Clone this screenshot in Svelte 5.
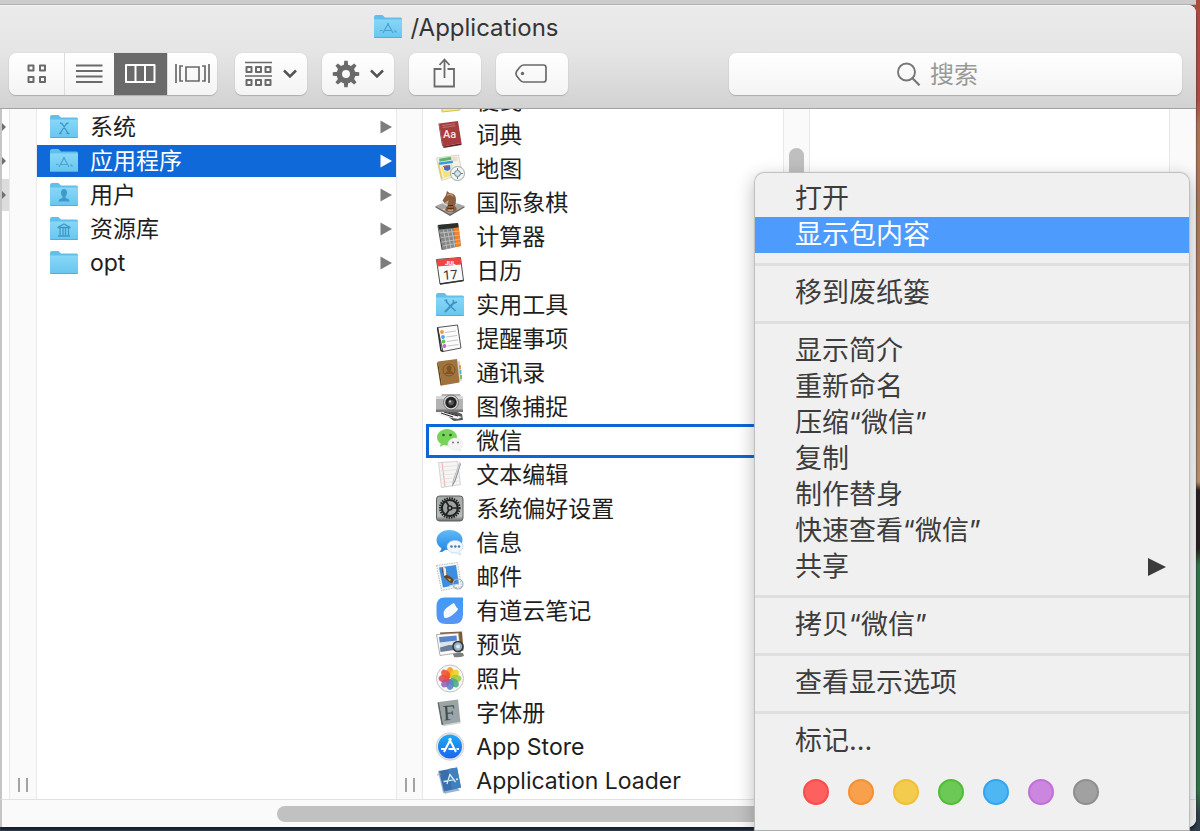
<script>
  const places = [
    { name: '系统', glyph: 'x' },
    { name: '应用程序', glyph: 'apps', selected: true },
    { name: '用户', glyph: 'user' },
    { name: '资源库', glyph: 'library' },
    { name: 'opt', glyph: '' },
  ];
  const apps = [
    { name: '便笺', icon: 'stickies' },
    { name: '词典', icon: 'dictionary' },
    { name: '地图', icon: 'maps' },
    { name: '国际象棋', icon: 'chess' },
    { name: '计算器', icon: 'calculator' },
    { name: '日历', icon: 'calendar' },
    { name: '实用工具', icon: 'utilities' },
    { name: '提醒事项', icon: 'reminders' },
    { name: '通讯录', icon: 'contacts' },
    { name: '图像捕捉', icon: 'capture' },
    { name: '微信', icon: 'wechat', target: true },
    { name: '文本编辑', icon: 'textedit' },
    { name: '系统偏好设置', icon: 'preferences' },
    { name: '信息', icon: 'messages' },
    { name: '邮件', icon: 'mail' },
    { name: '有道云笔记', icon: 'note' },
    { name: '预览', icon: 'preview' },
    { name: '照片', icon: 'photos' },
    { name: '字体册', icon: 'fontbook' },
    { name: 'App Store', icon: 'appstore' },
    { name: 'Application Loader', icon: 'loader' },
  ];
  const groups = [
    ['打开', '显示包内容'],
    ['移到废纸篓'],
    ['显示简介', '重新命名', '压缩“微信”', '复制', '制作替身', '快速查看“微信”', '共享'],
    ['拷贝“微信”'],
    ['查看显示选项'],
    ['标记...'],
  ];
  const tags = [
    ['红色', '#fc605f', '#fb4b49'],
    ['橙色', '#f8a04c', '#f6902f'],
    ['黄色', '#f3cb4f', '#f0c030'],
    ['绿色', '#6cc956', '#50bd36'],
    ['蓝色', '#4fb6f4', '#2fa6ef'],
    ['紫色', '#cb87df', '#c06fd8'],
    ['灰色', '#a1a1a1', '#8e8e8e'],
  ];
  const petals = ['#f9961b', '#f3cf17', '#9cc93a', '#45ac83', '#5285cb', '#8d66b5', '#dc4560', '#f0512b'];
  const teeth = [0, 45, 90, 135, 180, 225, 270, 315];
</script>

{#snippet folder(glyph)}
  <svg class="icon" viewBox="0 0 30 30" aria-hidden="true">
    <path d="M1 5q0-2 2-2h6.500l2.500 2.500h15.500q1.500 0 1.500 1.500v17.500q0 1.500-1.500 1.500h-25q-1.500 0-1.500-1.500z" fill="#62bfe9" />
    <path d="M1 7.500h28v17q0 1.500-1.500 1.500h-25q-1.500 0-1.500-1.500z" fill="url(#folder-face)" />
    <path d="M1.500 25.500h27" stroke="#4fafd9" />
    {#if glyph === 'x'}
      <path d="M11 11q2 0 3 2l5 8.500M19.500 11q-2 0-3 2l-5.500 8.500M10 21.500h2.500M17.500 21.500h3" fill="none" stroke="#3f97c4" stroke-width="1.300" />
    {:else if glyph === 'apps'}
      <path d="M15.500 11l-5.500 10M14.500 11l5.500 10M7 18.500h2.500M12 18.500h6.500M21.500 18.500l2 2" fill="none" stroke="#4ca3d0" stroke-width="1.200" />
    {:else if glyph === 'user'}
      <path d="M12 13q0-4 3-4t3 4q0 2.500-1.500 3.500v1.500q4 .800 4 3.500h-11q0-2.700 4-3.500v-1.500q-1.500-1-1.500-3.500z" fill="#4099c8" />
    {:else if glyph === 'library'}
      <path d="M8.500 13.500l6.500-3.500 6.500 3.500zM9 22h12M11 14v7M14 14v7M16.500 14v7M19.500 14v7" fill="none" stroke="#3f97c4" stroke-width="1.300" />
    {:else if glyph === 'tools'}
      <path d="M11 11.500l9.500 9.500" stroke="#3f93c4" stroke-width="1.500" />
      <path d="M19 12.500l-8.500 9" stroke="#3f93c4" stroke-width="2" stroke-linecap="round" />
      <path d="M18 10l1 3 3-1M9.500 10.500l2-.500 .5 2" fill="none" stroke="#3f93c4" stroke-width="1.400" />
    {/if}
  </svg>
{/snippet}

{#snippet appIcon(kind)}
  {#if kind === 'utilities'}
    {@render folder('tools')}
  {:else}
    <svg class="icon" viewBox="0 0 30 30" aria-hidden="true">
      {#if kind === 'stickies'}
        <path d="M6 3h19v21l-18 2z" fill="#f5ec82" stroke="#cfc34a" />
      {:else if kind === 'dictionary'}
        <path d="M4 3.500l19-2.500 3.500 22-18.500 3.500z" fill="#a63c3e" />
        <path d="M8 26.500l18.500-3.500v2l-18 3z" fill="#5f2527" />
        <path d="M4 3.500l4 23-1-1-3.500-21.500z" fill="#7d2a2d" />
        <path d="M7 5.500l13-1.700M7.500 7.500l13-1.700" stroke="#c87c7c" stroke-width=".8" />
        <text x="8" y="18" font-family="Roboto" font-size="11" font-weight="500" fill="#f6e6e6">Aa</text>
      {:else if kind === 'maps'}
        <path d="M1.500 4l22-3 4 19-21 6.500z" fill="#f5f3e8" stroke="#c9c7bd" stroke-width=".7" />
        <path d="M4 4.800l12-2 .5 3-12 2z" fill="#5bb667" />
        <path d="M17 3l5-.5 1 4-5 1z" fill="#f3d9d3" />
        <path d="M3.500 8.500l14-2 .7 2.500-14 2z" fill="#3c9be0" />
        <path d="M6 12l11-2 2 11-10 3z" fill="#f4e27a" />
        <path d="M8 11.500l7.500-1 .5 5q-3 3-7 1z" fill="#3f71c3" stroke="#fff" stroke-width=".8" />
        <path d="M8 12.500l7-1" stroke="#d95a55" />
        <path d="M3.500 10l3.500 15" stroke="#efc94a" stroke-width="1.500" />
        <circle cx="22.500" cy="19.500" r="7" fill="#f4f6f6" stroke="#9fa6a8" />
        <circle cx="22.500" cy="19.500" r="3" fill="#d5e2e4" stroke="#64888e" />
        <path d="M22.500 14v2M22.500 23v2M17 19.500h2M26 19.500h2" stroke="#777" />
      {:else if kind === 'chess'}
        <path d="M.5 18l14-5.500 15 5.500-14.500 8.500z" fill="#a7a6a4" />
        <path d="M8 15.500l7 3 8-3M7.500 22l15-7M22 22l-14.500-7" stroke="#d9d8d5" fill="none" />
        <path d="M.5 18l14.500 8 14.500-8v1.500l-14.500 8.500-14.500-8.500z" fill="#6e6a67" />
        <path d="M10.500 23q-1-3 2-5l1-5.500-4 2.500-2-2.500 3.500-5.500 1-4 2.500 2q6.500 0 6.500 7 0 4-1.500 6 3 2 2 5-5 2.500-11 0z" fill="#8d5e3e" />
        <path d="M12 20q4 1.500 7 0M13 17.500h5" stroke="#4d2d19" fill="none" />
        <path d="M12 7.500q4-3 6 1M13 22q3 1 5 0" stroke="#c69a72" fill="none" stroke-width="1.500" />
      {:else if kind === 'calculator'}
        <path d="M3 3l20-2 3 23-18 4z" fill="#858687" />
        <path d="M3 3l20-2 .8 4.500-20 2z" fill="#29302d" />
        <path d="M19 6l4.800-.500 2.200 18.500-5 1z" fill="#f58120" />
        <path d="M3 3l5 25-1.500-.500-4-23.500z" fill="#4a4b4c" />
        <path d="M5 11l20-2M6 15.500l19-2.500M7 20l19-3M8 24l18-3.500M8.500 8l3.500 19M12.500 7.500l3.500 19M16.500 7l3.500 18.500" stroke="#c4c6c6" stroke-width=".8" />
      {:else if kind === 'calendar'}
        <path d="M1.500 3.500l24-2 3 23-23.500 3.500z" fill="#fafafa" stroke="#4d4d4d" stroke-width="1" />
        <path d="M1.500 3.500l24-2 .8 7-24 2z" fill="#ef4444" />
        <path d="M5 28l23.500-3.500" stroke="#333" stroke-width="1.500" />
        <text x="10" y="8.500" font-family="Roboto" font-size="6" font-weight="700" fill="#fff">JUL</text>
        <text x="8" y="23.500" font-family="Roboto" font-size="13" fill="#333" transform="rotate(-5 15 19)">17</text>
      {:else if kind === 'reminders'}
        <path d="M2.500 3.500l20-2.500 3.500 23-18 3.500z" fill="#fbfbfb" stroke="#555" stroke-width="1" />
        <path d="M2.500 3.500l3.500 23 2 1" fill="none" stroke="#2e2e2e" stroke-width="1.500" />
        <circle cx="7" cy="8" r="1.900" fill="#ee963d" /><circle cx="8" cy="13" r="1.900" fill="#4aa3e4" />
        <circle cx="8.500" cy="17.500" r="1.900" fill="#67c15a" /><circle cx="9.500" cy="22" r="1.900" fill="#b86bd4" />
        <path d="M10 8.500l11-1.500M11 13l11-1.500M12 17.500l11-1.500M12.500 22l11-1.500" stroke="#c6c6c6" />
      {:else if kind === 'contacts'}
        <path d="M22 3l3 .500 2 19-3 1z" fill="#cfd7d9" />
        <path d="M24 7l2 .500v4l-2-.500z" fill="#e39a43" /><path d="M24.500 12h2v4h-2z" fill="#56b6d8" /><path d="M25 17h2v4h-2z" fill="#7bbf54" />
        <path d="M3 3.500l19-2.500 2.500 23.500-17.500 3z" fill="#a0733c" />
        <path d="M3 3.500l4 24h-1.500l-3.500-22z" fill="#654218" />
        <circle cx="14" cy="12" r="6" fill="none" stroke="#7d5524" />
        <path d="M10 16q1-3 3-3-1.500-1-1.500-3t2.500-2.500 2.500 2.500-1 3q2.500.500 3.500 3" fill="#7f5523" />
      {:else if kind === 'capture'}
        <path d="M2 17l8-2 17 7 1 6-9 1z" fill="#565656" /><path d="M1 19l5 5 17 3 4-2-16-5z" fill="#f1f1f1" /><path d="M6 21l12 4M9 20l14 4" stroke="#222" />
        <path d="M1 4h5l1-2h18l1 2h2v16h-27z" fill="#b3b3b3" /><path d="M1 4h27v3h-27z" fill="#d8d8d8" /><path d="M1 17.500h27v2.500h-27z" fill="#777" />
        <circle cx="16" cy="10.500" r="7.500" fill="#d3d3d3" stroke="#777" /><circle cx="16" cy="10.500" r="5.700" fill="#232323" /><circle cx="16" cy="10.500" r="2.800" fill="#57595c" /><circle cx="15" cy="9.500" r="1" fill="#dcdcdc" />
      {:else if kind === 'wechat'}
        <path d="M12 3c-5.500 0-10 3.700-10 8.300 0 2.800 1.500 4.900 3.800 6.400l-1 3.300 3.700-2.100q1.700.500 3.500.500c5.500 0 10-3.500 10-8.100s-4.500-8.300-10-8.300z" fill="#76d45a" />
        <circle cx="8.500" cy="9" r="1.300" fill="#2d5e22" /><circle cx="15.500" cy="9" r="1.300" fill="#2d5e22" />
        <path d="M20.500 12c-4.200 0-7.500 2.700-7.500 6s3.300 6 7.500 6q1.500 0 2.700-.300l2.800 1.500-.700-2.400c1.700-1.200 2.700-2.800 2.700-4.800 0-3.300-3.300-6-7.500-6z" fill="#f3f4f3" stroke="#dfe2df" stroke-width=".5" />
        <circle cx="18" cy="16.500" r="1" fill="#777" /><circle cx="23" cy="16.500" r="1" fill="#777" />
      {:else if kind === 'textedit'}
        <path d="M3.500 2.500l19-1 3 23-19 3z" fill="#f6f5f4" stroke="#c4c2c0" stroke-width=".7" />
        <path d="M7 2.500l3 24" stroke="#efaaaa" /><path d="M5 7l18-1.500M5.500 11l18-1.500M6 15l18-1.500M6.500 19l18-1.500M7 23l18-2" stroke="#dcdcdc" stroke-width=".7" />
        <path d="M24.500 2l1.500 2-5.500 17-3.500 6 1-6.500z" fill="#87898c" /><path d="M24.500 2l1 1-6 18-2 3 1-4z" fill="#d4d6d8" />
      {:else if kind === 'preferences'}
        <rect x="1.500" y="2" width="26.500" height="25" rx="3" fill="url(#metal)" stroke="#5d6160" />
        <circle cx="14.800" cy="14" r="9.800" fill="none" stroke="#222" stroke-width="2" stroke-dasharray="1.500 1" />
        <circle cx="14.800" cy="14" r="8" fill="#9da1a0" stroke="#202222" stroke-width="2.200" />
        <circle cx="14.800" cy="14" r="2" fill="none" stroke="#222" stroke-width="1.500" />
        <path d="M16.800 14h6M13.800 12l-3-5M13.800 16l-3 5" stroke="#222" stroke-width="1.700" />
      {:else if kind === 'messages'}
        <path d="M14 2c-7 0-12.500 4.500-12.500 10 0 3.500 2 6.500 5 8.200q-.500 2.500-2.500 4 4 0 6.500-2.500c9 2 17-3 17-9.700s-6.500-10-13.500-10z" fill="url(#bubble)" />
        <path d="M20 12.500c-4.500 0-8 2.700-8 6.200s3.500 6.300 8 6.300l1.500-.200q2 1.700 4.500 1.700-1.500-1-1.700-3c2.200-1 3.700-2.700 3.700-4.800 0-3.500-3.500-6.200-8-6.200z" fill="#f2f7fb" stroke="#a9cbe4" stroke-width=".6" />
        <circle cx="16.500" cy="18.500" r="1.300" fill="#3f7fb6" /><circle cx="20.300" cy="18.500" r="1.300" fill="#3f7fb6" /><circle cx="24" cy="18.500" r="1.300" fill="#3f7fb6" />
      {:else if kind === 'mail'}
        <path d="M1.500 3.500l21-3 4 24-20 4z" fill="#f5f5f3" stroke="#a9a9a7" stroke-width=".8" stroke-dasharray="1.500 1" />
        <path d="M4 5.500l17-2.500 3 19.500-16 3z" fill="#3d8ede" />
        <path d="M8 5q3-.500 3 3l1 5 4 2 5 5-3 0 1 2-5-2-5-5-2-6z" fill="#63452a" /><path d="M8 5q3-.500 3 3l.500 5-2.500 1z" fill="#f0ece2" /><path d="M12 16l4 1.500-1 2z" fill="#e5a936" />
        <circle cx="23" cy="22" r="5" fill="none" stroke="#a5b3bf" stroke-width="1.200" /><path d="M14 24l10-2" stroke="#cfe2f2" />
      {:else if kind === 'note'}
        <path d="M9.500 1.500h18.500v17q0 9.500-9.500 9.500h-7.500q-9.500 0-9.500-9.500v-8q0-9 8-9z" fill="url(#note-blue)" />
        <path d="M9 21.500q-1.500-7 3-10l6.500-4.500q1 0 2 2.500t2.500 3q.500 1.500-5 6t-9 3z" fill="#f6faff" />
      {:else if kind === 'preview'}
        <path d="M5 2.500l22-1 1.500 19-20 2z" fill="#7e5b36" /><path d="M1.500 4.500l22-1.500 2 19.500-20.500 3z" fill="#fbfbfb" stroke="#8e8e8e" stroke-width=".7" />
        <path d="M4 7l17.500-1.500.5 5.500-17.200 2z" fill="#5884c8" /><path d="M4.800 12.500l17.200-2 .7 8-17 2.500z" fill="#dbe4ec" /><path d="M5 17.500l9-2.500 8 .5.500 4-17 2.500z" fill="#6b7d98" />
        <circle cx="23" cy="16.500" r="5" fill="#98b3c8" stroke="#3a3a3a" stroke-width="1.700" /><circle cx="23" cy="16.500" r="2" fill="#dbe7ef" /><path d="M18 24q5-2 10-1l1 3q-5 2-10 1z" fill="#7c7d7f" />
      {:else if kind === 'photos'}
        <circle cx="15" cy="14.500" r="13.500" fill="#f7f7f7" stroke="#c2c2c2" />
        {#each petals as colour, i}
          <ellipse cx="15" cy="8.500" rx="3.800" ry="5.400" fill={colour} fill-opacity=".88" transform="rotate({i * 45} 15 14.500)" />
        {/each}
      {:else if kind === 'fontbook'}
        <path d="M4 4l19-2.500 2.500 23-17 3z" fill="#9ba5a5" /><path d="M4 4l4.500 23.500-2-.700-4-22z" fill="#5d6768" /><path d="M8.500 27.500l17-3" stroke="#d1d5d5" stroke-width="1.500" />
        <text x="8" y="22" font-family="Liberation Serif" font-size="22" fill="#414c4e" transform="rotate(-4 15 15)">F</text>
      {:else if kind === 'appstore'}
        <circle cx="15" cy="14.500" r="13.800" fill="#e6e7e9" stroke="#bbbdc0" stroke-width=".6" /><circle cx="15" cy="14.500" r="12" fill="url(#store)" />
        <path d="M16 6.500l-7 13.500M14 6.500l7 13.500M6 17h5M13.500 17h5M21.500 17h2.500" fill="none" stroke="#fff" stroke-width="2" />
      {:else if kind === 'loader'}
        <path d="M3 5.500l2-1 20 20-15 3-2-1z" fill="#94b4cf" /><path d="M4 5l18-3.500 4 20-17 4z" fill="#386fae" /><path d="M13 3l9-1.500 4 20-9 2z" fill="#437fbd" />
        <path d="M15 8l-3 10M14.500 8l6 8M8.500 15.500l4-.500M14 14.700l5-1M21 13.500l2-.5" fill="none" stroke="#d7eaf8" stroke-width="1.300" /><path d="M2 9l4-1M8.500 24.500l2 3" stroke="#9aa6b0" />
      {/if}
    </svg>
  {/if}
{/snippet}

{#snippet chevron()}
  <svg width="16" height="12" viewBox="0 0 16 12" aria-hidden="true"><path d="M2 2.500l6 6 6-6" fill="none" stroke="#535353" stroke-width="2.500" /></svg>
{/snippet}

<svg class="defs" aria-hidden="true">
  <defs>
    <linearGradient id="folder-face" x2="0" y2="1"><stop stop-color="#88d7f8" /><stop offset="1" stop-color="#67c6ef" /></linearGradient>
    <linearGradient id="metal" x2="0" y2="1"><stop stop-color="#a4aaa8" /><stop offset=".8" stop-color="#b9bdbc" /><stop offset="1" stop-color="#676b6a" /></linearGradient>
    <linearGradient id="bubble" x2="0" y2="1"><stop stop-color="#62baf8" /><stop offset="1" stop-color="#1e86e4" /></linearGradient>
    <linearGradient id="note-blue" x2="0" y2="1"><stop stop-color="#409bf5" /><stop offset="1" stop-color="#5a95f5" /></linearGradient>
    <linearGradient id="store" x2="0" y2="1"><stop stop-color="#1fa9f6" /><stop offset="1" stop-color="#1b66ea" /></linearGradient>
  </defs>
</svg>

<div class="desktop">
  <div class="behind"></div>
  <main class="window">
    <header>
      <h1>{@render folder('apps')}<span>/Applications</span></h1>
      <div class="toolbar">
        <div class="views">
          <button aria-label="图标显示">
            <svg width="20" height="20" viewBox="0 0 20 20"><path d="M1.500 1.500h5v5h-5zM13 1.500h5v5h-5zM1.500 13h5v5h-5zM13 13h5v5h-5z" fill="none" stroke="#6a6a6a" stroke-width="2" stroke-linejoin="round" /></svg>
          </button>
          <button aria-label="列表显示">
            <svg width="28" height="20" viewBox="0 0 28 20"><path d="M0 1.500h26.500M0 7h26.500M0 12.500h26.500M0 18h26.500" stroke="#6a6a6a" stroke-width="1.800" /></svg>
          </button>
          <button aria-label="分栏显示" class="active">
            <svg width="32" height="20" viewBox="0 0 32 20"><path d="M1 1h28.500v17h-28.500zM10.500 1v17M20 1v17" fill="none" stroke="#fff" stroke-width="2" stroke-linejoin="round" /></svg>
          </button>
          <button aria-label="封面流显示">
            <svg width="36" height="20" viewBox="0 0 36 20"><path d="M11 3h13v14h-13zM1 0v19M34 0v19M8 2h-3v15h3M27 2h3v15h-3" fill="none" stroke="#6a6a6a" stroke-width="1.700" /></svg>
          </button>
        </div>
        <button class="tool" aria-label="排列">
          <svg width="28" height="26" viewBox="0 0 28 26"><path d="M0 1.500h27M0 15h27" stroke="#6a6a6a" stroke-width="1.700" /><path d="M1.500 6h5v5h-5zM11 6h5v5h-5zM20.500 6h5v5h-5zM1.500 19h5v5h-5zM11 19h5v5h-5zM20.500 19h5v5h-5z" fill="none" stroke="#6a6a6a" stroke-width="2" stroke-linejoin="round" /></svg>
          {@render chevron()}
        </button>
        <button class="tool" aria-label="操作">
          <svg width="28" height="28" viewBox="0 0 28 28">
            {#each teeth as angle}
              <path d="M11.700 6l.600-5.200h3.400l.600 5.200z" fill="#6a6a6a" transform="rotate({angle} 14 14)" />
            {/each}
            <circle cx="14" cy="14" r="6.700" fill="none" stroke="#6a6a6a" stroke-width="5.500" />
          </svg>
          {@render chevron()}
        </button>
        <button class="tool" aria-label="共享">
          <svg width="24" height="32" viewBox="0 0 24 32"><path d="M8.500 11h-7v17.500h19.500v-17.500h-6.500M11.500 20v-18M6.500 7l5-5.500 5 5.500" fill="none" stroke="#6a6a6a" stroke-width="1.800" /></svg>
        </button>
        <button class="tool" aria-label="标记">
          <svg width="34" height="22" viewBox="0 0 34 22"><path d="M8.500 2h20q2.500 0 2.500 2.500v12q0 2.500-2.500 2.500h-20q-2 0-4-2.500l-2.700-3.500q-1.600-2.500 0-5l2.700-3.500q2-2.500 4-2.500z" fill="none" stroke="#6a6a6a" stroke-width="1.700" /><circle cx="7.500" cy="10.500" r="1.700" fill="#6a6a6a" /></svg>
        </button>
        <label class="search">
          <svg width="24" height="24" viewBox="0 0 24 24" aria-hidden="true"><circle cx="9.500" cy="10" r="8.500" fill="none" stroke="#777" stroke-width="1.900" /><path d="M15.500 16.300l7 7" stroke="#777" stroke-width="2.200" /></svg>
          <input type="search" placeholder="搜索" aria-label="搜索" />
        </label>
      </div>
    </header>

    <div class="columns">
      <ul class="list parent">
        <li></li>
        <li></li>
        <li class="trail"></li>
      </ul>
      <div class="gutter"><i class="grip"></i></div>
      <ul class="list places">
        {#each places as place}
          <li>
            <button class="row" class:selected={place.selected}>
              {@render folder(place.glyph)}
              <span>{place.name}</span>
              <svg class="arrow" width="12" height="14" viewBox="0 0 12 14" aria-hidden="true"><path d="M.500.500l11.500 6.500-11.500 6.500z" fill="currentColor" /></svg>
            </button>
          </li>
        {/each}
      </ul>
      <div class="gutter"><i class="grip"></i></div>
      <ul class="list apps">
        {#each apps as app}
          <li>
            <button class="row" class:target={app.target}>
              {@render appIcon(app.icon)}
              <span>{app.name}</span>
            </button>
          </li>
        {/each}
      </ul>
      <div class="gutter"><i class="thumb"></i></div>
      <div></div>
      <div class="gutter"></div>
    </div>
    <div class="track"><i></i></div>
  </main>

  <div class="menu" role="menu">
    {#each groups as group, g}
      {#if g > 0}<hr />{/if}
      {#each group as item}
        <button role="menuitem" class:highlight={item === '显示包内容'}>
          {item}
          {#if item === '共享'}
            <svg width="18" height="18" viewBox="0 0 18 18" aria-hidden="true"><path d="M0 0l18 9-18 9z" fill="#3b3b3b" /></svg>
          {/if}
        </button>
      {/each}
    {/each}
    <div class="tags">
      {#each tags as [name, fill, edge]}
        <button aria-label={name} style="background:{fill};border-color:{edge}"></button>
      {/each}
    </div>
  </div>
</div>

<style>
  :global(body) {
    margin: 0;
  }
  * {
    box-sizing: border-box;
  }
  button {
    font: inherit;
    color: inherit;
    border: 0;
    padding: 0;
    background: none;
  }
  ul {
    list-style: none;
    margin: 0;
    padding: 0;
  }
  .defs {
    position: absolute;
    width: 0;
    height: 0;
  }
  .desktop {
    position: relative;
    display: flex;
    flex-direction: column;
    height: 100vh;
    padding: 0 4px 4px 0;
    overflow: hidden;
    font-family: Inter, 'Noto Sans CJK SC', sans-serif;
    background: linear-gradient(#a84c40 0 12%, #a97354 15%, #c0926f 58%, #2b2022 59% 66%, #35764a 68% 95%, #33404e 98%);
  }
  .behind {
    flex: none;
    height: 5px;
    background: #cdcccd;
    border-bottom: 1px solid #b1afb1;
  }
  .window {
    flex: 1;
    min-height: 0;
    display: flex;
    flex-direction: column;
    overflow: hidden;
    border-radius: 0 8px 8px 0;
    background: #fff;
    box-shadow: 0 3px 2px #17222d;
  }
  header {
    flex: none;
    padding: 2px 14px 13px 9px;
    background: linear-gradient(#ecebec, #e6e5e6 45%, #d3d2d3);
    border-top: 1px solid #f5f4f5;
    border-bottom: 1px solid #a4a3a4;
  }
  h1 {
    display: flex;
    justify-content: center;
    align-items: center;
    gap: 8px;
    height: 38px;
    margin: 0 260px 7px 0;
    font-size: 24px;
    font-weight: 400;
    color: #353435;
  }
  .toolbar {
    display: flex;
    gap: 15px;
    height: 42px;
  }
  .views,
  .tool,
  .search {
    background: linear-gradient(#fff, #f4f4f4);
    border-radius: 7px;
    box-shadow: 0 1px 1px #aeadae, 0 0 1px #bbb;
  }
  .views {
    display: grid;
    grid-template-columns: 55px 50px 53px 50px;
    margin-right: 3px;
  }
  .views button {
    display: grid;
    place-items: center;
  }
  .views button + button {
    border-left: 1px solid #dcdcdc;
  }
  .views .active {
    background: #6a6a6a;
    border: 0;
  }
  .tool {
    display: flex;
    align-items: center;
    justify-content: center;
    gap: 9px;
    width: 72px;
  }
  .search {
    display: flex;
    align-items: center;
    justify-content: center;
    gap: 9px;
    width: 453px;
    margin-left: auto;
  }
  .search input {
    width: 84px;
    height: 36px;
    padding: 0;
    border: 0;
    outline: 0;
    background: none;
    font: inherit;
    font-size: 24px;
    appearance: none;
  }
  .search input::placeholder {
    color: #999;
  }
  .columns {
    flex: 1;
    min-height: 0;
    display: grid;
    grid-template-columns: 7px 28px 1fr 27px 1fr 27px 1fr 27px;
    grid-template-rows: minmax(0, 1fr);
    border-left: 2px solid #c5c5c5;
  }
  .gutter {
    display: flex;
    justify-content: center;
    align-items: flex-end;
    background: #fafafa;
    border: solid #e9e9e9;
    border-width: 0 1px;
  }
  .grip {
    width: 10px;
    height: 14px;
    margin-bottom: 7px;
    border: solid #a3a3a3;
    border-width: 0 2px;
  }
  .thumb {
    align-self: flex-start;
    width: 15px;
    height: 120px;
    margin-top: 39px;
    border-radius: 8px;
    background: #bfbfbf;
  }
  .list {
    display: flex;
    flex-direction: column;
    gap: 2px;
    padding-top: 2px;
    overflow: hidden;
    font-size: 23px;
    color: #1e1e1e;
  }
  .parent li {
    display: flex;
    align-items: center;
    height: 32px;
  }
  .parent li::before {
    content: '';
    border: solid transparent;
    border-width: 4px 0 4px 4px;
    border-left-color: #707070;
  }
  .parent .trail {
    background: #dcdcdc;
  }
  .row {
    display: flex;
    align-items: center;
    gap: 11px;
    width: 100%;
    height: 32px;
    padding: 0 4px 0 12px;
    text-align: left;
    white-space: nowrap;
    line-height: 32px;
  }
  .icon {
    flex: none;
    width: 30px;
    height: 30px;
  }
  .arrow {
    margin-left: auto;
    color: #7d7d7d;
  }
  .selected,
  .selected .arrow {
    color: #fff;
  }
  .selected {
    background: #1069d9;
  }
  .apps {
    padding: 0 0 0 4px;
  }
  .apps li:first-child {
    margin-top: -24px;
  }
  .apps .row {
    padding-left: 8px;
  }
  .target {
    outline: 3px solid #0d66d6;
    outline-offset: -2px;
  }
  .track {
    flex: none;
    height: 28px;
    padding: 6px 6px 0 275px;
    border-left: 2px solid #c5c5c5;
    border-top: 1px solid #e2e2e2;
    background: #fafafa;
  }
  .track i {
    display: block;
    height: 16px;
    border-radius: 8px;
    background: #c1c1c1;
  }
  .menu {
    position: absolute;
    top: 173px;
    right: 11px;
    width: 434px;
    padding: 8px 0 25px;
    border-radius: 9px 9px 0 0;
    background: #f0f0f0;
    box-shadow: 0 0 1px 1px #bdbdbd, 0 6px 18px 2px rgba(0, 0, 0, 0.24);
    font-size: 27px;
    line-height: 36px;
    color: #3d3d3d;
  }
  .menu > button {
    display: flex;
    align-items: center;
    justify-content: space-between;
    width: 100%;
    height: 36px;
    padding: 0 23px 0 40px;
    text-align: left;
  }
  .menu .highlight {
    background: #4d9bfc;
    color: #fff;
  }
  hr {
    height: 3px;
    margin: 10px 0 9px;
    border: 0;
    background: #dfdfdf;
  }
  .tags {
    display: flex;
    gap: 19px;
    padding: 20px 0 0 48px;
  }
  .tags button {
    width: 26px;
    height: 26px;
    border: 2px solid;
    border-radius: 50%;
  }
</style>
